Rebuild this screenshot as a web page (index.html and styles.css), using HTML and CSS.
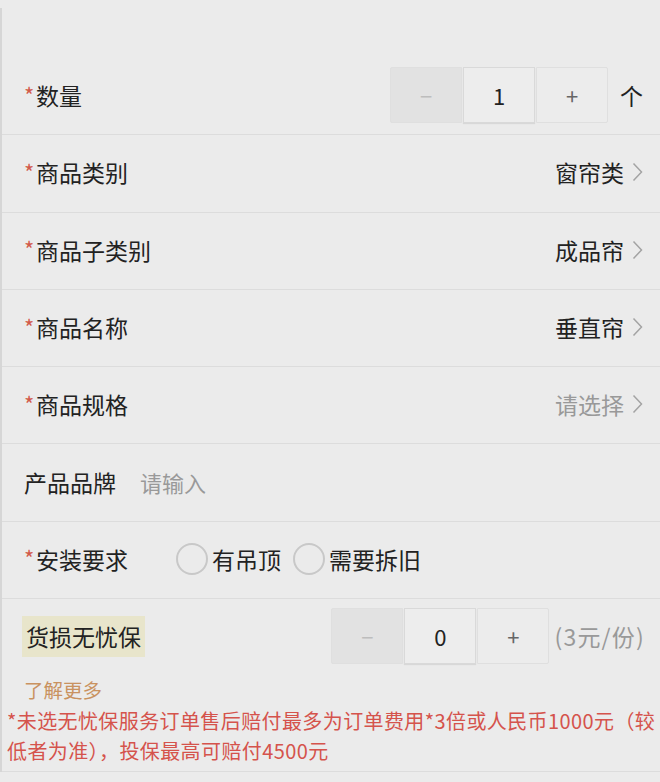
FILE: index.html
```html
<!DOCTYPE html>
<html lang="zh-CN">
<head>
<meta charset="utf-8">
<title>商品信息</title>
<link rel="stylesheet" href="styles.css">
</head>
<body>
<div class="page">
  <div class="frame">
    <div class="row">
      <div class="label"><span class="req">*</span>数量</div>
      <div class="right">
        <div class="stepper">
          <div class="step minus">−</div>
          <div class="step num">1</div>
          <div class="step plus">+</div>
        </div>
        <span class="unit">个</span>
      </div>
    </div>
    <div class="row">
      <div class="label"><span class="req">*</span>商品类别</div>
      <div class="right pick">
        <span class="value">窗帘类</span>
        <svg class="chev" width="11" height="20" viewBox="0 0 11 20"><polyline points="1.5,1.5 9.5,10 1.5,18.5" fill="none" stroke="#a3a3a3" stroke-width="1.5"/></svg>
      </div>
    </div>
    <div class="row">
      <div class="label"><span class="req">*</span>商品子类别</div>
      <div class="right pick">
        <span class="value">成品帘</span>
        <svg class="chev" width="11" height="20" viewBox="0 0 11 20"><polyline points="1.5,1.5 9.5,10 1.5,18.5" fill="none" stroke="#a3a3a3" stroke-width="1.5"/></svg>
      </div>
    </div>
    <div class="row">
      <div class="label"><span class="req">*</span>商品名称</div>
      <div class="right pick">
        <span class="value">垂直帘</span>
        <svg class="chev" width="11" height="20" viewBox="0 0 11 20"><polyline points="1.5,1.5 9.5,10 1.5,18.5" fill="none" stroke="#a3a3a3" stroke-width="1.5"/></svg>
      </div>
    </div>
    <div class="row">
      <div class="label"><span class="req">*</span>商品规格</div>
      <div class="right pick">
        <span class="value placeholder">请选择</span>
        <svg class="chev" width="11" height="20" viewBox="0 0 11 20"><polyline points="1.5,1.5 9.5,10 1.5,18.5" fill="none" stroke="#a3a3a3" stroke-width="1.5"/></svg>
      </div>
    </div>
    <div class="row">
      <div class="label">产品品牌</div>
      <div class="input placeholder">请输入</div>
    </div>
    <div class="row">
      <div class="label"><span class="req">*</span>安装要求</div>
      <div class="radios">
        <div class="radio"><span class="circle"></span><span>有吊顶</span></div>
        <div class="radio"><span class="circle"></span><span>需要拆旧</span></div>
      </div>
    </div>
    <div class="insure">
      <div class="ins-head">
        <div class="ins-label">货损无忧保</div>
        <div class="right">
          <div class="stepper">
            <div class="step minus">−</div>
            <div class="step num">0</div>
            <div class="step plus">+</div>
          </div>
          <span class="price">(3元/份)</span>
        </div>
      </div>
      <div class="learn">了解更多</div>
      <p class="notice">*未选无忧保服务订单售后赔付最多为订单费用*3倍或人民币1000元（较低者为准），投保最高可赔付4500元</p>
    </div>
  </div>
</div>
</body>
</html>
```

FILE: styles.css
```css
html, body {
  margin: 0;
  padding: 0;
  background: #ebebeb;
}
body {
  font-family: "Noto Sans CJK SC", "Noto Sans", sans-serif;
  color: #222;
}
.page {
  padding-top: 8px;
}
.frame {
  border-left: 2px solid #d6d6d6;
  padding-top: 50px;
}
.row {
  box-sizing: border-box;
  height: 77.3px;
  border-bottom: 1px solid #dcdcdc;
  display: flex;
  align-items: center;
  padding: 0 17px 2px 22px;
  font-size: 23px;
}
.label {
  display: flex;
  align-items: center;
  white-space: nowrap;
}
.req {
  color: #d25a4a;
  font-size: 22px;
  width: 12px;
  margin-top: -3px;
}
.right {
  margin-left: auto;
  display: flex;
  align-items: center;
}
.pick .value {
  color: #222;
}
.placeholder {
  color: #999 !important;
}
.chev {
  margin-left: 8px;
  display: block;
}
.stepper {
  display: flex;
  height: 56px;
}
.step {
  width: 72px;
  height: 56px;
  box-sizing: border-box;
  display: flex;
  align-items: center;
  justify-content: center;
  font-size: 22px;
  border: 1px solid #dfdfdf;
}
.minus {
  background: #e2e2e2;
  color: #bdbdbd;
  border-radius: 2px 0 0 2px;
}
.num {
  background: #ededed;
  color: #222;
  border-color: #d9d9d9;
  box-shadow: 0 1px 1px rgba(0, 0, 0, 0.08);
  margin: 0 1px;
}
.plus {
  background: #ececec;
  color: #666;
  border-radius: 0 2px 2px 0;
}
.unit {
  margin-left: 12px;
  font-size: 23px;
}
.input {
  margin-left: 24px;
  font-size: 22px;
}
.radios {
  display: flex;
  align-items: center;
  margin-left: 48px;
}
.radio {
  display: flex;
  align-items: center;
  margin-right: 12px;
}
.circle {
  width: 32px;
  height: 32px;
  box-sizing: border-box;
  border: 2px solid #c8c8c8;
  border-radius: 50%;
  margin-right: 4px;
}
.insure {
  border-bottom: 1px solid #dcdcdc;
  padding-bottom: 5px;
}
.ins-head {
  display: flex;
  align-items: center;
  padding: 9px 15px 0 20px;
}
.ins-label {
  background: #e8e5cb;
  font-size: 23px;
  padding: 0 4px;
  height: 41px;
  line-height: 41px;
}
.price {
  margin-left: 5px;
  font-size: 23px;
  letter-spacing: 1.2px;
  color: #999;
}
.learn {
  margin: 11px 0 0 22px;
  line-height: 30px;
  font-size: 19.5px;
  color: #c99260;
}
.notice {
  margin: 1px 0 0 0;
  padding: 0 0 0 5px;
  font-size: 20px;
  letter-spacing: 0.4px;
  line-height: 30px;
  color: #d5534c;
}
```
